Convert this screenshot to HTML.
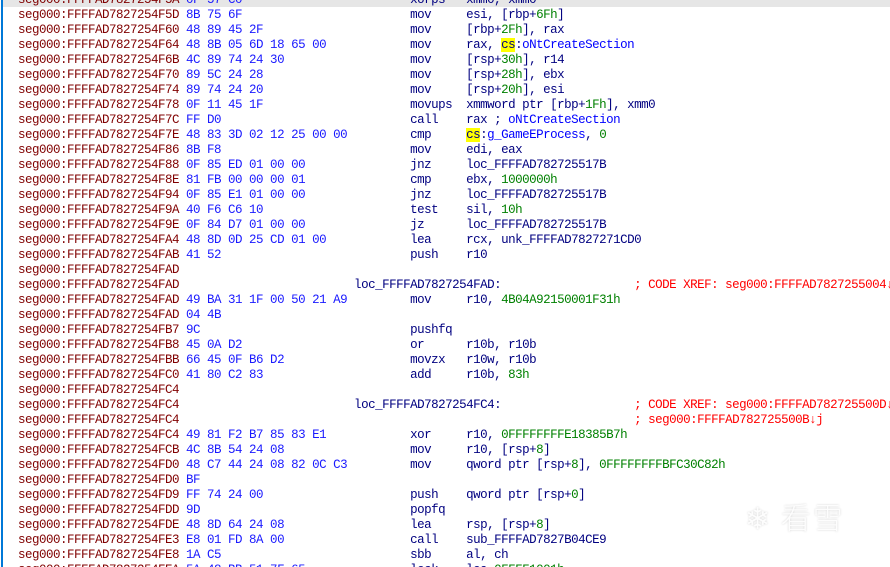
<!DOCTYPE html>
<html><head><meta charset="utf-8"><style>
html,body{margin:0;padding:0;background:#fff;width:890px;height:567px;overflow:hidden;position:relative}
.bar{position:absolute;left:1px;top:0;width:2px;height:567px;background:#0078d7}
.hl{position:absolute;left:3px;top:0;width:887px;height:7px;background:#e6e6e6}
pre{position:absolute;left:18px;top:-7.5px;margin:0;font-family:"Liberation Mono",monospace;font-size:12.5px;letter-spacing:-0.5px;line-height:15px;color:#000080;white-space:pre}
.a{color:#800000}.b{color:#1a1aff}.n{color:#008000}.c{color:#ff0000}.i{color:#0000ff}.y{background:#ffff00}
.wm{position:absolute;left:745px;top:494px;font-family:"Noto Sans CJK SC",sans-serif;font-size:30px;color:#fdfdfd;text-shadow:0 0 2px #d0d0d0;font-weight:300;letter-spacing:2px}
</style></head><body>
<div class="hl"></div><div class="bar"></div>
<pre><span class="a">seg000:FFFFAD7827254F5A</span> <span class="b">0F 57 C0</span>                        xorps   xmm0, xmm0
<span class="a">seg000:FFFFAD7827254F5D</span> <span class="b">8B 75 6F</span>                        mov     esi, [rbp+<span class="n">6Fh</span>]
<span class="a">seg000:FFFFAD7827254F60</span> <span class="b">48 89 45 2F</span>                     mov     [rbp+<span class="n">2Fh</span>], rax
<span class="a">seg000:FFFFAD7827254F64</span> <span class="b">48 8B 05 6D 18 65 00</span>            mov     rax, <span class="y">cs</span>:<span class="i">oNtCreateSection</span>
<span class="a">seg000:FFFFAD7827254F6B</span> <span class="b">4C 89 74 24 30</span>                  mov     [rsp+<span class="n">30h</span>], r14
<span class="a">seg000:FFFFAD7827254F70</span> <span class="b">89 5C 24 28</span>                     mov     [rsp+<span class="n">28h</span>], ebx
<span class="a">seg000:FFFFAD7827254F74</span> <span class="b">89 74 24 20</span>                     mov     [rsp+<span class="n">20h</span>], esi
<span class="a">seg000:FFFFAD7827254F78</span> <span class="b">0F 11 45 1F</span>                     movups  xmmword ptr [rbp+<span class="n">1Fh</span>], xmm0
<span class="a">seg000:FFFFAD7827254F7C</span> <span class="b">FF D0</span>                           call    rax ; <span class="i">oNtCreateSection</span>
<span class="a">seg000:FFFFAD7827254F7E</span> <span class="b">48 83 3D 02 12 25 00 00</span>         cmp     <span class="y">cs</span>:<span class="i">g_GameEProcess</span>, <span class="n">0</span>
<span class="a">seg000:FFFFAD7827254F86</span> <span class="b">8B F8</span>                           mov     edi, eax
<span class="a">seg000:FFFFAD7827254F88</span> <span class="b">0F 85 ED 01 00 00</span>               jnz     loc_FFFFAD782725517B
<span class="a">seg000:FFFFAD7827254F8E</span> <span class="b">81 FB 00 00 00 01</span>               cmp     ebx, <span class="n">1000000h</span>
<span class="a">seg000:FFFFAD7827254F94</span> <span class="b">0F 85 E1 01 00 00</span>               jnz     loc_FFFFAD782725517B
<span class="a">seg000:FFFFAD7827254F9A</span> <span class="b">40 F6 C6 10</span>                     test    sil, <span class="n">10h</span>
<span class="a">seg000:FFFFAD7827254F9E</span> <span class="b">0F 84 D7 01 00 00</span>               jz      loc_FFFFAD782725517B
<span class="a">seg000:FFFFAD7827254FA4</span> <span class="b">48 8D 0D 25 CD 01 00</span>            lea     rcx, unk_FFFFAD7827271CD0
<span class="a">seg000:FFFFAD7827254FAB</span> <span class="b">41 52</span>                           push    r10
<span class="a">seg000:FFFFAD7827254FAD</span>
<span class="a">seg000:FFFFAD7827254FAD</span>                         loc_FFFFAD7827254FAD:                   <span class="c">; CODE XREF: seg000:FFFFAD7827255004↓</span>
<span class="a">seg000:FFFFAD7827254FAD</span> <span class="b">49 BA 31 1F 00 50 21 A9</span>         mov     r10, <span class="n">4B04A92150001F31h</span>
<span class="a">seg000:FFFFAD7827254FAD</span> <span class="b">04 4B</span>
<span class="a">seg000:FFFFAD7827254FB7</span> <span class="b">9C</span>                              pushfq
<span class="a">seg000:FFFFAD7827254FB8</span> <span class="b">45 0A D2</span>                        or      r10b, r10b
<span class="a">seg000:FFFFAD7827254FBB</span> <span class="b">66 45 0F B6 D2</span>                  movzx   r10w, r10b
<span class="a">seg000:FFFFAD7827254FC0</span> <span class="b">41 80 C2 83</span>                     add     r10b, <span class="n">83h</span>
<span class="a">seg000:FFFFAD7827254FC4</span>
<span class="a">seg000:FFFFAD7827254FC4</span>                         loc_FFFFAD7827254FC4:                   <span class="c">; CODE XREF: seg000:FFFFAD782725500D↓</span>
<span class="a">seg000:FFFFAD7827254FC4</span>                                                                 <span class="c">; seg000:FFFFAD782725500B↓j</span>
<span class="a">seg000:FFFFAD7827254FC4</span> <span class="b">49 81 F2 B7 85 83 E1</span>            xor     r10, <span class="n">0FFFFFFFFE18385B7h</span>
<span class="a">seg000:FFFFAD7827254FCB</span> <span class="b">4C 8B 54 24 08</span>                  mov     r10, [rsp+<span class="n">8</span>]
<span class="a">seg000:FFFFAD7827254FD0</span> <span class="b">48 C7 44 24 08 82 0C C3</span>         mov     qword ptr [rsp+<span class="n">8</span>], <span class="n">0FFFFFFFFBFC30C82h</span>
<span class="a">seg000:FFFFAD7827254FD0</span> <span class="b">BF</span>
<span class="a">seg000:FFFFAD7827254FD9</span> <span class="b">FF 74 24 00</span>                     push    qword ptr [rsp+<span class="n">0</span>]
<span class="a">seg000:FFFFAD7827254FDD</span> <span class="b">9D</span>                              popfq
<span class="a">seg000:FFFFAD7827254FDE</span> <span class="b">48 8D 64 24 08</span>                  lea     rsp, [rsp+<span class="n">8</span>]
<span class="a">seg000:FFFFAD7827254FE3</span> <span class="b">E8 01 FD 8A 00</span>                  call    sub_FFFFAD7827B04CE9
<span class="a">seg000:FFFFAD7827254FE8</span> <span class="b">1A C5</span>                           sbb     al, ch
<span class="a">seg000:FFFFAD7827254FEA</span> <span class="b">5A 48 BB 51 7F 65</span>               lock    lea <span class="n">0FFFF1001h</span></pre>
<div class="wm">❄ 看雪</div>
</body></html>
